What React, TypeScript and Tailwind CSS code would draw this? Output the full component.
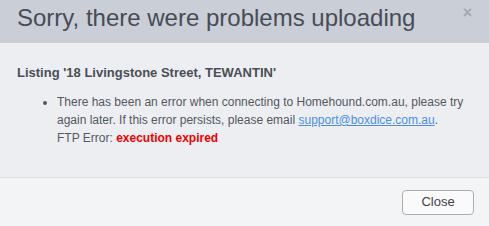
import React from "react";

export default function App() {
  return (
    <div className="w-[489px] h-[226px] flex flex-col bg-[#eceef2]" style={{ fontFamily: '"Liberation Sans", Arial, sans-serif' }}>
      <div className="h-[43px] bg-[#c9ced7] flex items-start justify-between pl-[17px] pr-[17px]">
        <h1 className="text-[24px] leading-[24px] pt-[6px] text-[#474c55] font-normal">Sorry, there were problems uploading</h1>
        <span className="text-[#a3a9b2] text-[16px] font-bold leading-none pt-[5px]">×</span>
      </div>
      <div className="flex-1 px-[17px] pt-[22px]">
        <h2 className="text-[13px] font-bold text-[#4a4e55] leading-[16px]">Listing '18 Livingstone Street, TEWANTIN'</h2>
        <ul className="list-disc pl-[40px] mt-[12px] text-[12px] leading-[18px] text-[#545861] marker:text-[#545861]">
          <li>
            There has been an error when connecting to Homehound.com.au, please try again later. If this error persists, please email{" "}
            <a className="text-[#4d8fe0] underline">support@boxdice.com.au</a>.<br />
            FTP Error: <span className="text-[#f00000] font-bold">execution expired</span>
          </li>
        </ul>
      </div>
      <div className="h-[49px] border-t border-[#dcdee2] bg-[#f3f4f6] flex items-center justify-end pr-[15px]">
        <button className="w-[72px] h-[25px] rounded-[4px] border border-[#a9adb4] bg-[#fafafa] text-[13px] text-[#3f434a]">Close</button>
      </div>
    </div>
  );
}
